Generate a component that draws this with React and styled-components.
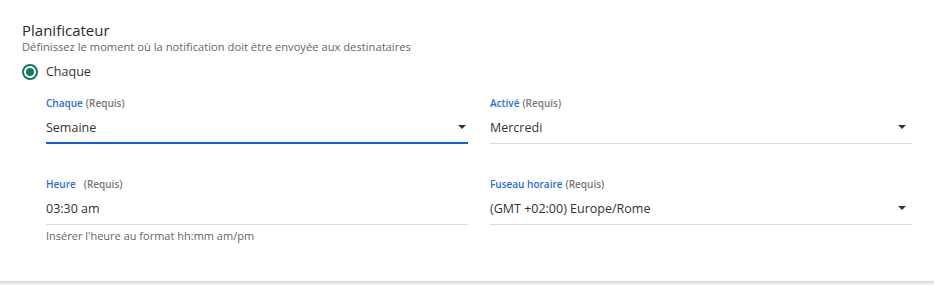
import React from "react";
import styled, { createGlobalStyle } from "styled-components";

const Global = createGlobalStyle`
  html, body { margin: 0; padding: 0; background: #fff; }
  body { font-family: "Open Sans", "Noto Sans", sans-serif; color: #333; }
`;

const Card = styled.section`
  width: 934px;
  height: 285px;
  box-sizing: border-box;
  padding: 20px 22px 0 22px;
  background: linear-gradient(
    to bottom,
    #fff 0,
    #fff 281px,
    #d4d4d4 281px,
    #e6e6e6 283px,
    #f4f4f4 285px
  );
`;

const Title = styled.h2`
  margin: 0;
  font-size: 15px;
  font-weight: 500;
  line-height: 20px;
  color: #2b2b2b;
`;

const Subtitle = styled.p`
  margin: 0;
  font-size: 11.2px;
  line-height: 14px;
  color: #666;
`;

const RadioRow = styled.label`
  display: flex;
  align-items: center;
  gap: 8px;
  margin-top: 9px;
  font-size: 12.5px;
  color: #333;
`;

const RadioDot = styled.span`
  width: 16px;
  height: 16px;
  box-sizing: border-box;
  border-radius: 50%;
  border: 2px solid #0f7a5e;
  display: flex;
  align-items: center;
  justify-content: center;
  &::after {
    content: "";
    width: 8px;
    height: 8px;
    border-radius: 50%;
    background: #0f7a5e;
  }
`;

const Grid = styled.div`
  display: grid;
  grid-template-columns: 422px 422px;
  column-gap: 22px;
  padding-left: 24px;
  margin-top: 16px;
`;

const Field = styled.div`
  display: flex;
  flex-direction: column;
  height: 81px;
`;

const Label = styled.div`
  font-size: 10px;
  line-height: 14px;
  font-weight: 600;
  color: #1f6fdc;
  display: flex;
  gap: ${p => p.$gap || 3}px;
`;

const Req = styled.span`
  color: #777;
`;

const Control = styled.div`
  display: flex;
  align-items: center;
  justify-content: space-between;
  height: 32px;
  margin-top: 2px;
  font-size: 12.5px;
  color: #333;
  border-bottom: ${p => (p.$focused ? "2px solid #0b62d6" : "1px solid #ddd")};
  box-sizing: border-box;
  padding-right: ${p => (p.$focused ? 2 : 6)}px;
  padding-bottom: ${p => (p.$focused ? 0 : 1)}px;
`;

const Arrow = styled.span`
  width: 0;
  height: 0;
  border-left: 4px solid transparent;
  border-right: 4px solid transparent;
  border-top: 4px solid #333;
`;

const Helper = styled.div`
  font-size: 11px;
  line-height: 14px;
  color: #666;
  margin-top: 4px;
`;

function SelectField({ label, value, focused, gap, helper, select = true }) {
  return (
    <Field>
      <Label $gap={gap}>
        <span>{label}</span>
        <Req>(Requis)</Req>
      </Label>
      <Control $focused={focused}>
        <span>{value}</span>
        {select && <Arrow />}
      </Control>
      {helper && <Helper>{helper}</Helper>}
    </Field>
  );
}

export default function App() {
  return (
    <>
      <Global />
      <Card>
        <Title>Planificateur</Title>
        <Subtitle>Définissez le moment où la notification doit être envoyée aux destinataires</Subtitle>
        <RadioRow>
          <RadioDot />
          Chaque
        </RadioRow>
        <Grid>
          <SelectField label="Chaque" value="Semaine" focused />
          <SelectField label="Activé" value="Mercredi" />
          <SelectField label="Heure" value="03:30 am" gap={8} select={false}
            helper="Insérer l'heure au format hh:mm am/pm" />
          <SelectField label="Fuseau horaire" value="(GMT +02:00) Europe/Rome" />
        </Grid>
      </Card>
    </>
  );
}
